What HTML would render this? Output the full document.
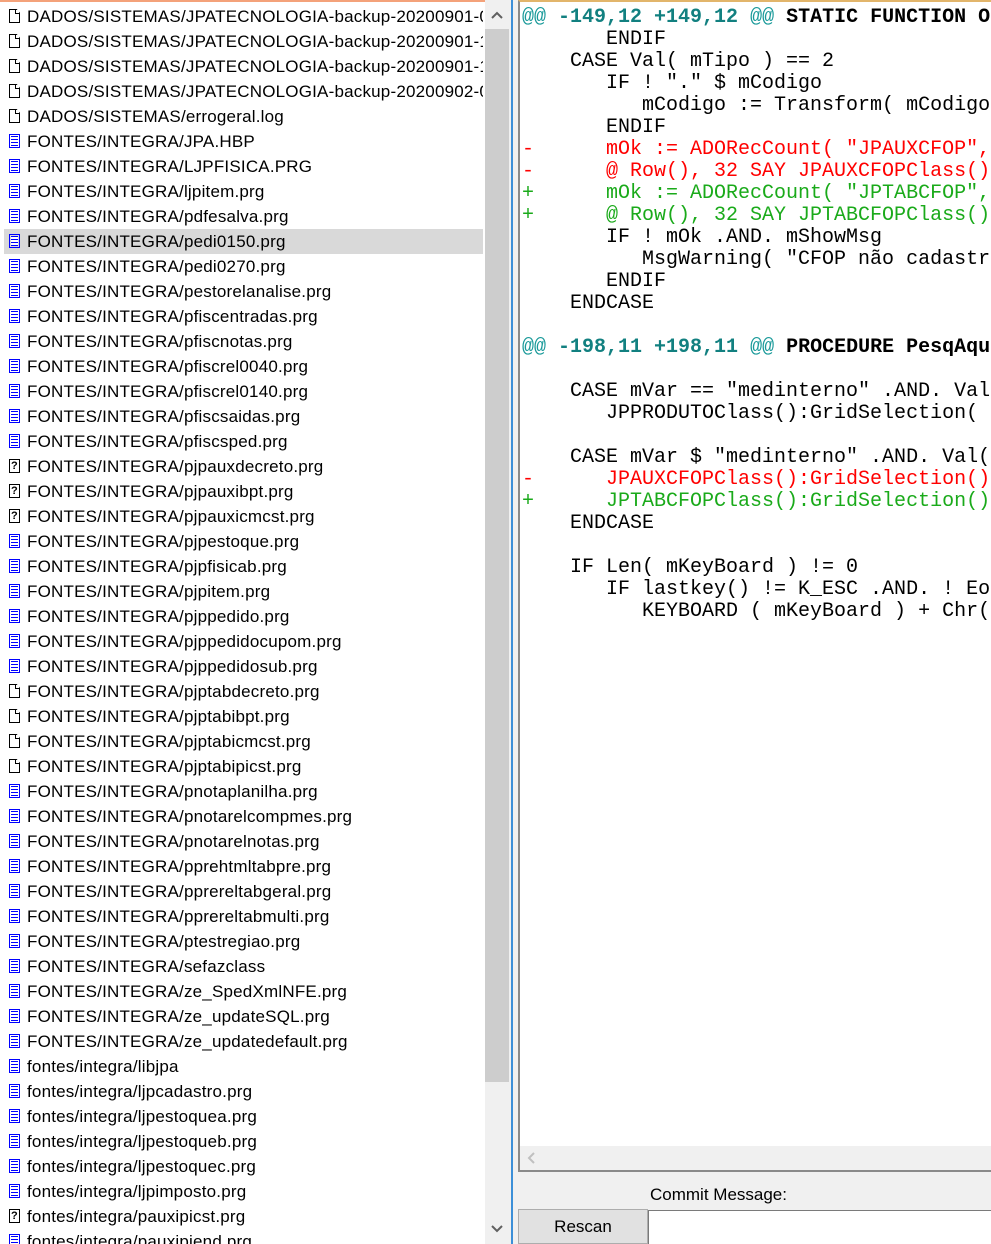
<!DOCTYPE html>
<html><head><meta charset="utf-8"><style>
*{margin:0;padding:0;box-sizing:border-box}
body{width:991px;height:1244px;overflow:hidden;background:#f0f0f0;position:relative;font-family:"Liberation Sans",sans-serif}
#list{position:absolute;left:0;top:0;width:485px;height:1244px;background:#fff;overflow:hidden;border-top:2px solid #f4a27a}
.r{position:absolute;left:4px;width:479px;height:25px;font-size:17px;line-height:25px;color:#000;white-space:nowrap;overflow:hidden;padding-left:23px;letter-spacing:0.2px}
.r.sel{background:#d9d9d9}
.r i{position:absolute;left:5px;top:5px;width:11px;height:14px}
.w i{border:1px solid #000;background:#fff;clip-path:polygon(0 0,70% 0,100% 28%,100% 100%,0 100%)}
.w i:after{content:"";position:absolute;right:-1px;top:-1px;width:4px;height:4px;border-left:1px solid #000;border-bottom:1px solid #000}
.b i{border:1px solid #0000ff;background:repeating-linear-gradient(#fff 0 1px,#0000ff 1px 2px,#fff 2px 3px);background-clip:content-box;padding:1px}
.q i{border:1px solid #000;font-style:normal;font-size:11px;line-height:12px;text-align:center;font-weight:bold}
.q i:after{content:"?"}
#vs{position:absolute;left:485px;top:0;width:24px;height:1244px;background:#f0f0f0}
#thumb{position:absolute;left:485px;top:29px;width:24px;height:1053px;background:#cdcdcd}
#vline{position:absolute;left:511px;top:0;width:2px;height:1244px;background:#3c8fd8}
#diff{position:absolute;left:518px;top:0;width:473px;height:1172px;background:#fff;border:2px solid #8a8a8a;border-right:none;border-top:2px solid #e2b56b;overflow:hidden}
#hs{position:absolute;left:520px;top:1146px;width:471px;height:24px;background:#f0f0f0}
pre{position:absolute;left:2px;top:5px;font-family:"Liberation Mono",monospace;font-size:20px;line-height:22px;color:#000;white-space:pre}
.h{color:#1a9a9a}.hn{color:#128080;font-weight:bold}.hb{font-weight:bold}
.m{color:#f00}.p{color:#1aaa1a}
#cm{position:absolute;left:650px;top:1185px;font-size:17px}
#btn{position:absolute;left:518px;top:1209px;width:130px;height:35px;background:#e1e1e1;border:1px solid #adadad;font-size:17px;text-align:center;line-height:33px}
#msg{position:absolute;left:648px;top:1210px;width:343px;height:34px;background:#fff;border:1px solid #7a7a7a;border-right:none;border-bottom:none}
</style></head><body>
<div id="list">
<div class="r w" style="top:2px"><i></i>DADOS/SISTEMAS/JPATECNOLOGIA-backup-20200901-0</div>
<div class="r w" style="top:27px"><i></i>DADOS/SISTEMAS/JPATECNOLOGIA-backup-20200901-1</div>
<div class="r w" style="top:52px"><i></i>DADOS/SISTEMAS/JPATECNOLOGIA-backup-20200901-1</div>
<div class="r w" style="top:77px"><i></i>DADOS/SISTEMAS/JPATECNOLOGIA-backup-20200902-0</div>
<div class="r w" style="top:102px"><i></i>DADOS/SISTEMAS/errogeral.log</div>
<div class="r b" style="top:127px"><i></i>FONTES/INTEGRA/JPA.HBP</div>
<div class="r b" style="top:152px"><i></i>FONTES/INTEGRA/LJPFISICA.PRG</div>
<div class="r b" style="top:177px"><i></i>FONTES/INTEGRA/ljpitem.prg</div>
<div class="r b" style="top:202px"><i></i>FONTES/INTEGRA/pdfesalva.prg</div>
<div class="r b sel" style="top:227px"><i></i>FONTES/INTEGRA/pedi0150.prg</div>
<div class="r b" style="top:252px"><i></i>FONTES/INTEGRA/pedi0270.prg</div>
<div class="r b" style="top:277px"><i></i>FONTES/INTEGRA/pestorelanalise.prg</div>
<div class="r b" style="top:302px"><i></i>FONTES/INTEGRA/pfiscentradas.prg</div>
<div class="r b" style="top:327px"><i></i>FONTES/INTEGRA/pfiscnotas.prg</div>
<div class="r b" style="top:352px"><i></i>FONTES/INTEGRA/pfiscrel0040.prg</div>
<div class="r b" style="top:377px"><i></i>FONTES/INTEGRA/pfiscrel0140.prg</div>
<div class="r b" style="top:402px"><i></i>FONTES/INTEGRA/pfiscsaidas.prg</div>
<div class="r b" style="top:427px"><i></i>FONTES/INTEGRA/pfiscsped.prg</div>
<div class="r q" style="top:452px"><i></i>FONTES/INTEGRA/pjpauxdecreto.prg</div>
<div class="r q" style="top:477px"><i></i>FONTES/INTEGRA/pjpauxibpt.prg</div>
<div class="r q" style="top:502px"><i></i>FONTES/INTEGRA/pjpauxicmcst.prg</div>
<div class="r b" style="top:527px"><i></i>FONTES/INTEGRA/pjpestoque.prg</div>
<div class="r b" style="top:552px"><i></i>FONTES/INTEGRA/pjpfisicab.prg</div>
<div class="r b" style="top:577px"><i></i>FONTES/INTEGRA/pjpitem.prg</div>
<div class="r b" style="top:602px"><i></i>FONTES/INTEGRA/pjppedido.prg</div>
<div class="r b" style="top:627px"><i></i>FONTES/INTEGRA/pjppedidocupom.prg</div>
<div class="r b" style="top:652px"><i></i>FONTES/INTEGRA/pjppedidosub.prg</div>
<div class="r w" style="top:677px"><i></i>FONTES/INTEGRA/pjptabdecreto.prg</div>
<div class="r w" style="top:702px"><i></i>FONTES/INTEGRA/pjptabibpt.prg</div>
<div class="r w" style="top:727px"><i></i>FONTES/INTEGRA/pjptabicmcst.prg</div>
<div class="r w" style="top:752px"><i></i>FONTES/INTEGRA/pjptabipicst.prg</div>
<div class="r b" style="top:777px"><i></i>FONTES/INTEGRA/pnotaplanilha.prg</div>
<div class="r b" style="top:802px"><i></i>FONTES/INTEGRA/pnotarelcompmes.prg</div>
<div class="r b" style="top:827px"><i></i>FONTES/INTEGRA/pnotarelnotas.prg</div>
<div class="r b" style="top:852px"><i></i>FONTES/INTEGRA/pprehtmltabpre.prg</div>
<div class="r b" style="top:877px"><i></i>FONTES/INTEGRA/pprereltabgeral.prg</div>
<div class="r b" style="top:902px"><i></i>FONTES/INTEGRA/pprereltabmulti.prg</div>
<div class="r b" style="top:927px"><i></i>FONTES/INTEGRA/ptestregiao.prg</div>
<div class="r b" style="top:952px"><i></i>FONTES/INTEGRA/sefazclass</div>
<div class="r b" style="top:977px"><i></i>FONTES/INTEGRA/ze_SpedXmlNFE.prg</div>
<div class="r b" style="top:1002px"><i></i>FONTES/INTEGRA/ze_updateSQL.prg</div>
<div class="r b" style="top:1027px"><i></i>FONTES/INTEGRA/ze_updatedefault.prg</div>
<div class="r b" style="top:1052px"><i></i>fontes/integra/libjpa</div>
<div class="r b" style="top:1077px"><i></i>fontes/integra/ljpcadastro.prg</div>
<div class="r b" style="top:1102px"><i></i>fontes/integra/ljpestoquea.prg</div>
<div class="r b" style="top:1127px"><i></i>fontes/integra/ljpestoqueb.prg</div>
<div class="r b" style="top:1152px"><i></i>fontes/integra/ljpestoquec.prg</div>
<div class="r b" style="top:1177px"><i></i>fontes/integra/ljpimposto.prg</div>
<div class="r q" style="top:1202px"><i></i>fontes/integra/pauxipicst.prg</div>
<div class="r b" style="top:1227px"><i></i>fontes/integra/pauxipiend.prg</div>
</div>
<div id="vs"></div><div id="thumb"></div>
<svg style="position:absolute;left:489px;top:8px" width="16" height="14"><path d="M3 10 L8 5 L13 10" stroke="#606060" stroke-width="2" fill="none"/></svg>
<svg style="position:absolute;left:489px;top:1222px" width="16" height="14"><path d="M3 4 L8 9 L13 4" stroke="#606060" stroke-width="2" fill="none"/></svg>
<div id="vline"></div>
<div id="diff"><pre><span class="h">@@</span> <span class="hn">-149,12 +149,12</span> <span class="h">@@</span> <span class="hb">STATIC FUNCTION OK</span>
       ENDIF
    CASE Val( mTipo ) == 2
       IF ! "." $ mCodigo
          mCodigo := Transform( mCodigo
       ENDIF
<span class="m">-      mOk := ADORecCount( "JPAUXCFOP",</span>
<span class="m">-      @ Row(), 32 SAY JPAUXCFOPClass()</span>
<span class="p">+      mOk := ADORecCount( "JPTABCFOP",</span>
<span class="p">+      @ Row(), 32 SAY JPTABCFOPClass()</span>
       IF ! mOk .AND. mShowMsg
          MsgWarning( "CFOP não cadastr
       ENDIF
    ENDCASE

<span class="h">@@</span> <span class="hn">-198,11 +198,11</span> <span class="h">@@</span> <span class="hb">PROCEDURE PesqAqu</span>

    CASE mVar == "medinterno" .AND. Val
       JPPRODUTOClass():GridSelection(

    CASE mVar $ "medinterno" .AND. Val(
<span class="m">-      JPAUXCFOPClass():GridSelection()</span>
<span class="p">+      JPTABCFOPClass():GridSelection()</span>
    ENDCASE

    IF Len( mKeyBoard ) != 0
       IF lastkey() != K_ESC .AND. ! Eo
          KEYBOARD ( mKeyBoard ) + Chr(</pre></div>
<div id="hs"></div>
<svg style="position:absolute;left:526px;top:1151px" width="12" height="14"><path d="M8 2 L3 7 L8 12" stroke="#c0c0c0" stroke-width="2" fill="none"/></svg>
<div id="cm">Commit Message:</div>
<div id="btn">Rescan</div>
<div id="msg"></div>
</body></html>
